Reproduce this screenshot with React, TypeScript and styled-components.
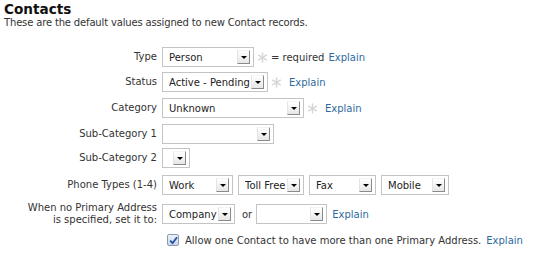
import React from "react";
import styled, { createGlobalStyle } from "styled-components";

const Global = createGlobalStyle`
  html, body { margin: 0; padding: 0; background: #fff; }
  body { font-family: Verdana, "DejaVu Sans", sans-serif; color: #222; }
`;

const Page = styled.div`
  padding: 1px 4px;
  width: 551px;
  box-sizing: border-box;
`;

const Title = styled.h2`
  margin: 0;
  font-size: 13.6px;
  font-weight: bold;
  line-height: 16px;
  color: #111;
`;

const Subtitle = styled.p`
  margin: 0;
  font-size: 10px;
  letter-spacing: -0.16px;
  line-height: 12px;
  color: #333;
`;

const Form = styled.div`
  display: flex;
  flex-direction: column;
`;

const Row = styled.div<{ $mt: number }>`
  display: flex;
  align-items: center;
  gap: 5px;
  margin-top: ${(p) => p.$mt}px;
`;

const Label = styled.div`
  width: 153px;
  flex: none;
  text-align: right;
  font-size: 10px;
  line-height: 12px;
  color: #333;
`;

const Controls = styled.div`
  display: flex;
  align-items: center;
  font-size: 10px;
  color: #333;
`;

const Selects = styled.div`
  display: flex;
  align-items: center;
  gap: 5px;
`;

const SelectBox = styled.div<{ $w: number }>`
  width: ${(p) => p.$w}px;
  height: 20px;
  box-sizing: border-box;
  border: 1px solid #c4c4c4;
  background: #fff;
  display: flex;
  align-items: center;
  padding-left: 6px;
  padding-right: 3px;
  font-size: 10px;
  color: #222;
`;

const SelectText = styled.span`
  flex: 1;
  white-space: nowrap;
  overflow: hidden;
`;

const Arrow = styled.span`
  width: 13px;
  height: 14px;
  box-sizing: border-box;
  flex: none;
  background: linear-gradient(#ffffff, #e6e6e6);
  border-top: 1px solid #f4f4f4;
  border-left: 1px solid #e4e4e4;
  border-right: 1px solid #8a8a8a;
  border-bottom: 1px solid #8a8a8a;
  display: flex;
  align-items: center;
  justify-content: center;
  &::after {
    content: "";
    width: 0;
    height: 0;
    border-left: 3px solid transparent;
    border-right: 3px solid transparent;
    border-top: 3px solid #000;
  }
`;

const Link = styled.a<{ $ml?: number }>`
  color: #2e6a9e;
  text-decoration: none;
  font-size: 10px;
  white-space: nowrap;
  margin-left: ${(p) => p.$ml ?? 5}px;
`;

const Note = styled.span<{ $ml?: number; $mr?: number }>`
  font-size: 10px;
  color: #333;
  white-space: nowrap;
  margin-left: ${(p) => p.$ml ?? 0}px;
  margin-right: ${(p) => p.$mr ?? 0}px;
`;

const StarIcon = styled.svg`
  flex: none;
  margin-left: 3px;
`;

const CheckRow = styled.div`
  display: flex;
  align-items: center;
  gap: 5px;
  padding-left: 163px;
  margin-top: 8px;
  font-size: 10px;
  color: #333;
  white-space: nowrap;
`;

const CheckBox = styled.span`
  width: 12px;
  height: 12px;
  box-sizing: border-box;
  border: 1px solid #8d9aad;
  border-radius: 2px;
  background: linear-gradient(#eef3fb, #c9d6ea);
  display: flex;
  align-items: center;
  justify-content: center;
  margin-right: 1px;
`;

const Star = () => (
  <StarIcon width="11" height="11" viewBox="0 0 11 11">
    <g stroke="#d6d6d6" strokeWidth="1.5" strokeLinecap="round">
      <line x1="5.5" y1="1" x2="5.5" y2="10" />
      <line x1="1.6" y1="3.2" x2="9.4" y2="7.8" />
      <line x1="1.6" y1="7.8" x2="9.4" y2="3.2" />
    </g>
  </StarIcon>
);

const Select = ({ w, value = "" }: { w: number; value?: string }) => (
  <SelectBox $w={w}>
    <SelectText>{value}</SelectText>
    <Arrow />
  </SelectBox>
);

export default function App() {
  return (
    <Page>
      <Global />
      <Title>Contacts</Title>
      <Subtitle>These are the default values assigned to new Contact records.</Subtitle>
      <Form>
        <Row $mt={18}>
          <Label>Type</Label>
          <Controls>
            <Select w={92} value="Person" />
            <Star />
            <Note $ml={3}>= required</Note>
            <Link href="#" $ml={4}>Explain</Link>
          </Controls>
        </Row>
        <Row $mt={5}>
          <Label>Status</Label>
          <Controls>
            <Select w={106} value="Active - Pending" />
            <Star />
            <Link href="#" $ml={7}>Explain</Link>
          </Controls>
        </Row>
        <Row $mt={6}>
          <Label>Category</Label>
          <Controls>
            <Select w={142} value="Unknown" />
            <Star />
            <Link href="#" $ml={7}>Explain</Link>
          </Controls>
        </Row>
        <Row $mt={6}>
          <Label>Sub-Category 1</Label>
          <Controls>
            <Select w={112} />
          </Controls>
        </Row>
        <Row $mt={4}>
          <Label>Sub-Category 2</Label>
          <Controls>
            <Select w={28} />
          </Controls>
        </Row>
        <Row $mt={7}>
          <Label>Phone Types (1-4)</Label>
          <Selects>
            <Select w={71} value="Work" />
            <Select w={66} value="Toll Free" />
            <Select w={67} value="Fax" />
            <Select w={68} value="Mobile" />
          </Selects>
        </Row>
        <Row $mt={7}>
          <Label>
            When no Primary Address
            <br />
            is specified, set it to:
          </Label>
          <Controls>
            <Select w={73} value="Company" />
            <Note $ml={7} $mr={4}>or</Note>
            <Select w={71} />
            <Link href="#" $ml={5}>Explain</Link>
          </Controls>
        </Row>
        <CheckRow>
          <CheckBox>
            <svg width="9" height="9" viewBox="0 0 9 9">
              <path d="M1.2 4.6 L3.6 7.2 L8 1.2" fill="none" stroke="#1f4fa8" strokeWidth="1.8" />
            </svg>
          </CheckBox>
          <span>Allow one Contact to have more than one Primary Address.</span>
          <Link href="#" $ml={0}>Explain</Link>
        </CheckRow>
      </Form>
    </Page>
  );
}
